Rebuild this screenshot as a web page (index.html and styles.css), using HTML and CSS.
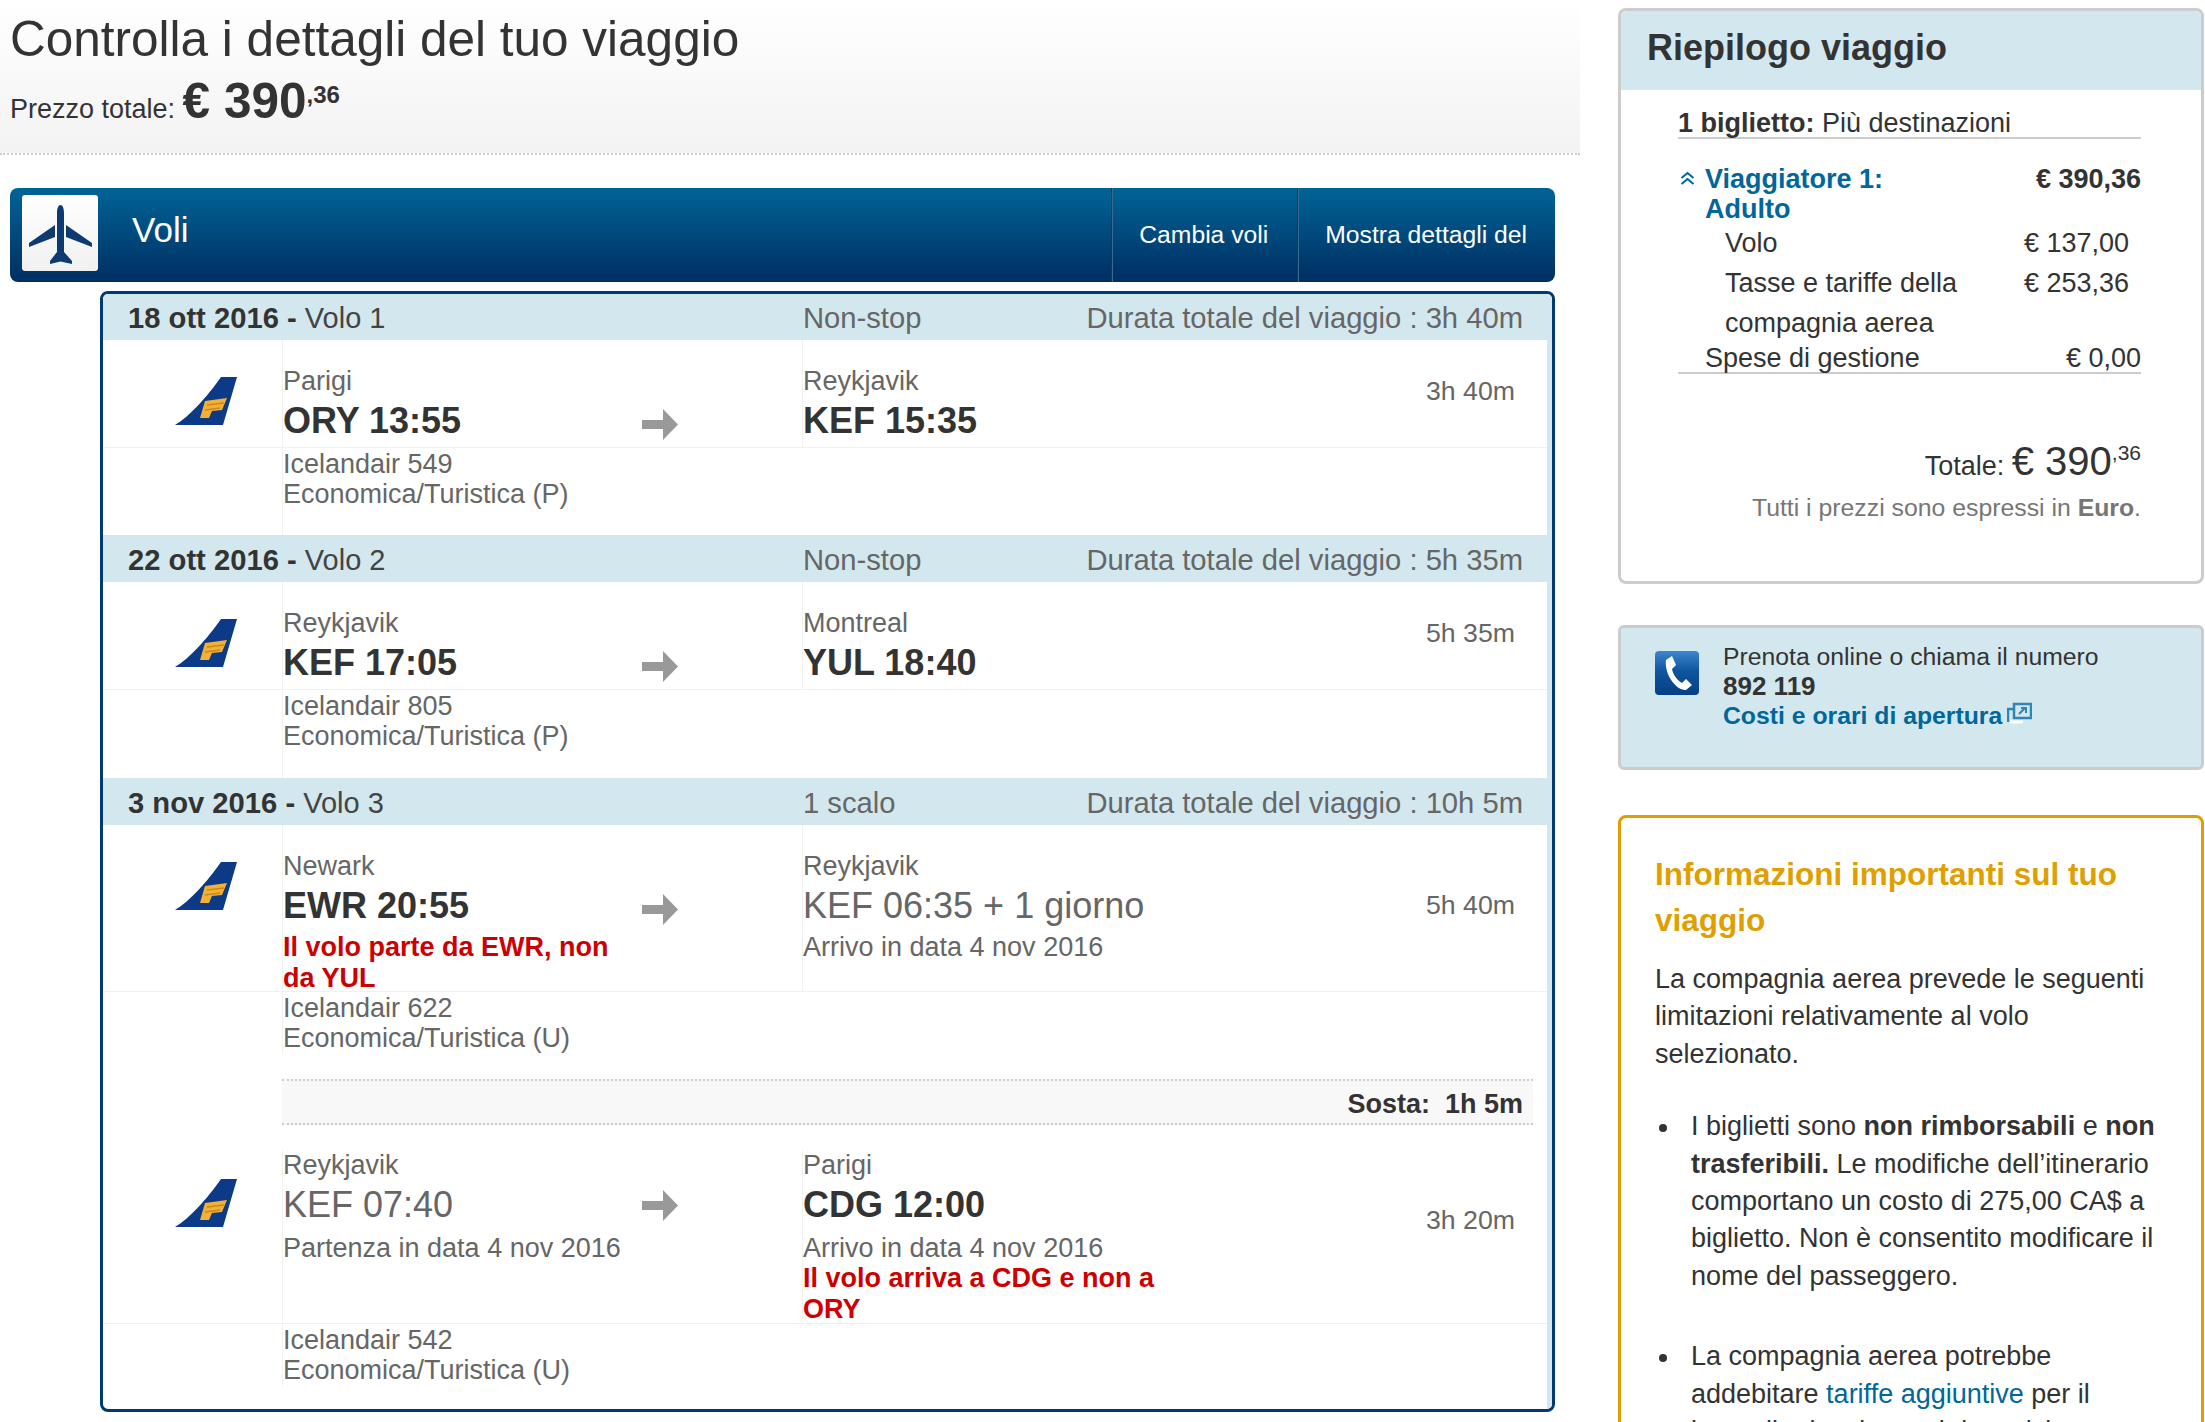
FILE: index.html
```html
<!DOCTYPE html>
<html lang="it">
<head>
  <meta charset="UTF-8" />
  <title>Controlla i dettagli del tuo viaggio</title>
  <link rel="stylesheet" href="styles.css">
</head>
<body>

<svg class="defs" width="0" height="0">
  <symbol id="tail" viewBox="0 0 62 48">
    <path d="M46 0H62L48 48H0C14 40 32 20 46 0Z" fill="#0c3a86"/>
    <path d="M30 24L52 21L47 33L37 34L34 41L25 41Z" fill="#f2b035"/>
    <path d="M32 28L49 26M30 33L45 31" stroke="#c98a1c" stroke-width="1.500"/>
  </symbol>
  <symbol id="arrow" viewBox="0 0 36 31">
    <path d="M0 11H21V0L36 15.500L21 31V20H0Z" fill="#999"/>
  </symbol>
</svg>

<div class="page">
  <main class="main">
    <header class="review-head">
      <h1>Controlla i dettagli del tuo viaggio</h1>
      <div class="review-price">Prezzo totale: <strong>€ 390<sup>,36</sup></strong></div>
    </header>

    <div class="bar">
      <div class="bar-icon">
        <svg width="76" height="76" viewBox="0 0 76 76">
          <path d="M38.500 10C36 10 35 14 35 18V57L28 66V69L38.500 66.500L50 69V66L42 57V18C42 14 41 10 38.500 10Z" fill="#0d3b71"/>
          <path d="M33 30V42L7 52V48Z M44 30V42L70 52V48Z" fill="#0d3b71"/>
        </svg>
      </div>
      <div class="bar-title">Voli</div>
      <a class="bar-btn">Cambia voli</a>
      <a class="bar-btn">Mostra dettagli del</a>
    </div>

    <section class="flights">
      <div class="date-row">
        <div class="date-col"><b>18 ott 2016 -</b> <span>Volo 1</span></div>
        <div>Non-stop</div>
        <div class="date-total">Durata totale del viaggio : 3h 40m</div>
      </div>
      <div class="flight">
        <div class="seg">
          <div class="seg-logo"><svg width="62" height="48"><use href="#tail"/></svg></div>
          <div class="seg-from">
            <div class="seg-text">
              <div class="city">Parigi</div>
              <div class="time">ORY 13:55</div>
            </div>
            <svg class="arrow" width="36" height="31"><use href="#arrow"/></svg>
          </div>
          <div class="seg-to">
            <div class="city">Reykjavik</div>
            <div class="time">KEF 15:35</div>
          </div>
          <div class="seg-dur">3h 40m</div>
        </div>
        <div class="details">Icelandair 549<br>Economica/Turistica (P)</div>
      </div>

      <div class="date-row">
        <div class="date-col"><b>22 ott 2016 -</b> <span>Volo 2</span></div>
        <div>Non-stop</div>
        <div class="date-total">Durata totale del viaggio : 5h 35m</div>
      </div>
      <div class="flight flight-2">
        <div class="seg">
          <div class="seg-logo"><svg width="62" height="48"><use href="#tail"/></svg></div>
          <div class="seg-from">
            <div class="seg-text">
              <div class="city">Reykjavik</div>
              <div class="time">KEF 17:05</div>
            </div>
            <svg class="arrow" width="36" height="31"><use href="#arrow"/></svg>
          </div>
          <div class="seg-to">
            <div class="city">Montreal</div>
            <div class="time">YUL 18:40</div>
          </div>
          <div class="seg-dur">5h 35m</div>
        </div>
        <div class="details">Icelandair 805<br>Economica/Turistica (P)</div>
      </div>

      <div class="date-row">
        <div class="date-col"><b>3 nov 2016 -</b> <span>Volo 3</span></div>
        <div>1 scalo</div>
        <div class="date-total">Durata totale del viaggio : 10h 5m</div>
      </div>
      <div class="flight flight-last">
        <div class="seg">
          <div class="seg-logo"><svg width="62" height="48"><use href="#tail"/></svg></div>
          <div class="seg-from">
            <div class="seg-text">
              <div class="city">Newark</div>
              <div class="time">EWR 20:55</div>
              <div class="note">Il volo parte da EWR, non da YUL</div>
            </div>
            <svg class="arrow" width="36" height="31"><use href="#arrow"/></svg>
          </div>
          <div class="seg-to">
            <div class="city">Reykjavik</div>
            <div class="time time-light">KEF 06:35 + 1 giorno</div>
            <div class="sub">Arrivo in data 4 nov 2016</div>
          </div>
          <div class="seg-dur">5h 40m</div>
        </div>
        <div class="details">Icelandair 622<br>Economica/Turistica (U)</div>

        <div class="layover"><b>Sosta:&nbsp; 1h 5m</b></div>

        <div class="seg seg-after">
          <div class="seg-logo"><svg width="62" height="48"><use href="#tail"/></svg></div>
          <div class="seg-from">
            <div class="seg-text">
              <div class="city">Reykjavik</div>
              <div class="time time-light">KEF 07:40</div>
              <div class="sub">Partenza in data 4 nov 2016</div>
            </div>
            <svg class="arrow" width="36" height="31"><use href="#arrow"/></svg>
          </div>
          <div class="seg-to">
            <div class="city">Parigi</div>
            <div class="time">CDG 12:00</div>
            <div class="sub">Arrivo in data 4 nov 2016</div>
            <div class="note">Il volo arriva a CDG e non a ORY</div>
          </div>
          <div class="seg-dur">3h 20m</div>
        </div>
        <div class="details">Icelandair 542<br>Economica/Turistica (U)</div>
      </div>
    </section>
  </main>

  <aside class="side">
    <section class="summary">
      <h2>Riepilogo viaggio</h2>
      <div class="summary-body">
        <div class="tickets"><b>1 biglietto:</b> Più destinazioni</div>

        <div class="traveller">
          <svg class="chevrons" width="15" height="15" viewBox="0 0 15 15">
            <path d="M1.500 7L7.500 2L13.500 7M1.500 13L7.500 8L13.500 13" fill="none" stroke="#00669b" stroke-width="2"/>
          </svg>
          <a class="traveller-name">Viaggiatore 1: Adulto</a>
          <b class="traveller-price">€ 390,36</b>
        </div>
        <div class="fare"><div class="fare-label">Volo</div><div>€ 137,00</div></div>
        <div class="fare"><div class="fare-label">Tasse e tariffe della compagnia aerea</div><div>€ 253,36</div></div>
        <div class="fees"><div>Spese di gestione</div><div>€ 0,00</div></div>

        <div class="total">Totale: <span class="total-num">€ 390<sup>,36</sup></span></div>
        <div class="currency">Tutti i prezzi sono espressi in <b>Euro</b>.</div>
      </div>
    </section>

    <section class="phone">
      <svg class="phone-icon" width="44" height="44" viewBox="0 0 44 44">
        <defs>
          <linearGradient id="phoneBg" x1="0" y1="0" x2="0" y2="1">
            <stop offset="0" stop-color="#3f86d0"/>
            <stop offset="0.450" stop-color="#0f569f"/>
            <stop offset="1" stop-color="#053f85"/>
          </linearGradient>
        </defs>
        <rect width="44" height="44" rx="4" fill="url(#phoneBg)"/>
        <path d="M11 9L17 5L21 14L17 18C18 24 23 30 27 32L31 28L37 34L31 39C22 40 9 24 11 9Z" fill="#fff"/>
      </svg>
      <div class="phone-text">
        <div>Prenota online o chiama il numero</div>
        <b class="phone-num">892 119</b>
        <div><a class="phone-link">Costi e orari di apertura</a><svg class="ext" width="25" height="22" viewBox="0 0 25 22">
            <path d="M7 2H24V16H7Z" fill="#d3e8ee" stroke="#2f85b5" stroke-width="2.500"/>
            <path d="M1 20V7H6" fill="none" stroke="#2f85b5" stroke-width="2.500"/>
            <path d="M12 12L18 6M14 6H19V11" fill="none" stroke="#2f85b5" stroke-width="2"/>
            <path d="M3 20H16" stroke="#fff" stroke-width="3"/>
          </svg></div>
      </div>
    </section>

    <section class="notice">
      <h3>Informazioni importanti sul tuo viaggio</h3>
      <p>La compagnia aerea prevede le seguenti limitazioni relativamente al volo selezionato.</p>
      <ul>
        <li>I biglietti sono <b>non rimborsabili</b> e <b>non trasferibili.</b> Le modifiche dell’itinerario comportano un costo di 275,00 CA$ a biglietto. Non è consentito modificare il nome del passeggero.</li>
        <li>La compagnia aerea potrebbe addebitare <a>tariffe aggiuntive</a> per il bagaglio da stiva o altri servizi.</li>
      </ul>
    </section>
  </aside>
</div>

</body>
</html>
```

FILE: styles.css
```css
html, body {
  margin: 0;
  height: 1422px;
  overflow: hidden;
}

body {
  font-family: 'Liberation Sans', Arial, sans-serif;
  font-size: 27px;
  line-height: 30px;
  color: #333;
  background: #fff;
}

.defs {
  display: block;
}

.page {
  display: flex;
  align-items: flex-start;
}

.main {
  width: 1580px;
  flex-shrink: 0;
}

/* top heading */
.review-head {
  height: 142px;
  padding: 11px 0 0 10px;
  background: linear-gradient(to bottom, #fff, #f3f3f3);
  border-bottom: 2px dotted #ccc;
}

.review-head h1 {
  margin: 0;
  font-size: 49.500px;
  line-height: 56px;
  font-weight: 400;
}

.review-price {
  margin-top: 6px;
  line-height: 56px;
}

.review-price strong {
  font-size: 49.500px;
}

.review-price sup {
  font-size: 24px;
  line-height: 0;
  vertical-align: 15px;
}

/* blue bar */
.bar {
  display: flex;
  align-items: stretch;
  height: 94px;
  margin: 33px 25px 0 10px;
  border-radius: 8px;
  background: linear-gradient(to bottom, #006497, #002e62);
  color: #fff;
}

.bar-icon {
  width: 76px;
  height: 76px;
  margin: 7px 0 0 12px;
  border-radius: 3px;
  background: linear-gradient(to bottom, #fff, #f1f1f1);
}

.bar-title {
  flex-grow: 1;
  margin-left: 34px;
  font-size: 35px;
  line-height: 84px;
}

.bar-btn {
  padding: 0 29px 0 27px;
  font-size: 24.700px;
  line-height: 94px;
  border-left: 1px solid #0b3a5c;
  box-shadow: inset 1px 0 0 #3a6a8c;
}

.bar-btn:last-child {
  padding-right: 28px;
}

/* flights panel */
.flights {
  margin: 9px 25px 0 100px;
  height: 1115px;
  border: 3px solid #003a70;
  border-radius: 8px;
  overflow: hidden;
}

.date-row {
  display: flex;
  height: 47px;
  padding-right: 29px;
  background: #d3e8ee;
  font-size: 29.200px;
  line-height: 50px;
  color: #666;
}

.date-row:first-child {
  height: 46px;
  line-height: 49px;
}

.date-col {
  width: 675px;
  padding-left: 25px;
}

.date-col b {
  color: #333;
}

.date-col span {
  font-size: 29px;
  color: #444;
}

.date-total {
  margin-left: auto;
}

.flight {
  height: 195px;
  border-right: 5px solid #d3e8ee;
}

.flight-2 {
  height: 196px;
}

.flight-last {
  height: 584px;
}

.seg {
  display: grid;
  grid-template-columns: 179px 520px 360px 1fr;
  border-bottom: 1px solid #f1f1f1;
}

.seg-logo {
  padding: 37px 0 0 72px;
}

.seg-logo svg {
  display: block;
}

.seg-from, .seg-to {
  padding-top: 29px;
  border-left: 1px solid #f1f1f1;
}

.seg-from {
  display: flex;
}

.seg-text {
  width: 340px;
}

.arrow {
  margin: 40px 0 0 19px;
}

.seg-to {
  padding-right: 5px;
}

.city, .sub, .details, .seg-dur {
  color: #666;
}

.city {
  margin: -3px 0 4px;
}

.time {
  font-size: 36px;
  line-height: 42px;
  font-weight: 700;
  margin-bottom: 5px;
}

.time-light {
  font-weight: 400;
  color: #666;
}

.sub, .note {
  margin-top: 5px;
}

.sub + .note {
  margin-top: 0;
}

.note {
  margin-bottom: -3px;
  line-height: 31px;
  font-weight: 700;
  color: #c00;
}

.seg-dur {
  align-self: center;
  padding: 0 32px 6px 0;
  font-size: 26.700px;
  text-align: right;
}

.details {
  min-height: 61px;
  margin-left: 179px;
  padding-top: 1px;
  border-left: 1px solid #f1f1f1;
}

.flight .details {
  padding-bottom: 26px;
}

.flight-last .details {
  padding-bottom: 0;
}

.layover {
  height: 42px;
  margin: 25px 14px 0 179px;
  padding-right: 10px;
  background: #f8f8f8;
  border-top: 2px dotted #ccc;
  border-bottom: 2px dotted #ccc;
  text-align: right;
  line-height: 47px;
}

.seg-after {
  margin-top: 25px;
  padding-bottom: 1px;
}

.seg-after .seg-logo {
  padding-top: 29px;
}

.seg-after .seg-from, .seg-after .seg-to {
  padding-top: 3px;
}

.seg-after .sub {
  margin-top: 7px;
}

.seg-after .arrow {
  margin-top: 37px;
}

.seg-after .seg-dur {
  padding-bottom: 33px;
}

/* right column */
.side {
  width: 586px;
  margin-left: 38px;
  padding-top: 8px;
}

.summary {
  height: 570px;
  border: 3px solid #ccc;
  border-radius: 8px;
  overflow: hidden;
}

.summary h2 {
  margin: 0;
  height: 79px;
  padding-left: 26px;
  background: #d3e8ee;
  font-size: 36px;
  line-height: 74px;
}

.summary-body {
  padding: 18px 60px 0 57px;
}

.tickets {
  border-bottom: 2px solid #ccc;
  height: 29px;
}

.traveller {
  display: flex;
  margin: 25px 0 -1px;
  color: #333;
}

.chevrons {
  width: 15px;
  margin: 7px 10px 0 2px;
  flex-shrink: 0;
}

.traveller-name {
  width: 240px;
  font-weight: 700;
  color: #00669b;
}

.traveller-price {
  margin-left: auto;
}

.fare {
  display: flex;
  justify-content: space-between;
  padding: 0 12px 0 47px;
  line-height: 40px;
}

.fare-label {
  width: 250px;
}

.fees {
  display: flex;
  justify-content: space-between;
  height: 29px;
  padding-left: 27px;
  line-height: 31px;
  border-bottom: 2px solid #ccc;
}

.total {
  margin-top: 64px;
  font-size: 27px;
  line-height: 46px;
  text-align: right;
}

.total-num {
  font-size: 40px;
}

.total sup {
  font-size: 21px;
  line-height: 0;
  vertical-align: 15px;
}

.currency {
  margin-top: 4px;
  font-size: 24.800px;
  color: #767676;
  text-align: right;
}

.phone {
  display: flex;
  height: 139px;
  margin-top: 41px;
  padding: 0 0 0 34px;
  background: #d3e8ee;
  border: 3px solid #ccc;
  border-radius: 6px;
  font-size: 24.750px;
}

.phone-icon {
  margin-top: 23px;
  flex-shrink: 0;
}

.phone-text {
  margin: 14px 0 0 24px;
}

.phone-num {
  display: block;
  font-size: 26px;
  margin-top: -1px;
}

.phone-link {
  font-weight: 700;
  color: #00669b;
}

.ext {
  margin-left: 5px;
  vertical-align: 0;
}

.notice {
  margin-top: 45px;
  padding: 33px 36px 0 34px;
  height: 700px;
  border: 3px solid #e09f00;
  border-radius: 8px;
}

.notice h3 {
  margin: 0;
  font-size: 31.500px;
  line-height: 46px;
  color: #e09f00;
}

.notice p {
  margin: 18px 0 0;
  line-height: 37.400px;
}

.notice ul {
  margin: 35px 0 0;
  padding: 0 0 0 36px;
  list-style: none;
  line-height: 37.400px;
}

.notice li {
  position: relative;
  margin-bottom: 43px;
}

.notice li::before {
  content: "";
  position: absolute;
  left: -32px;
  top: 16px;
  width: 8px;
  height: 8px;
  border-radius: 50%;
  background: #333;
}

.notice a {
  color: #00669b;
}
```
